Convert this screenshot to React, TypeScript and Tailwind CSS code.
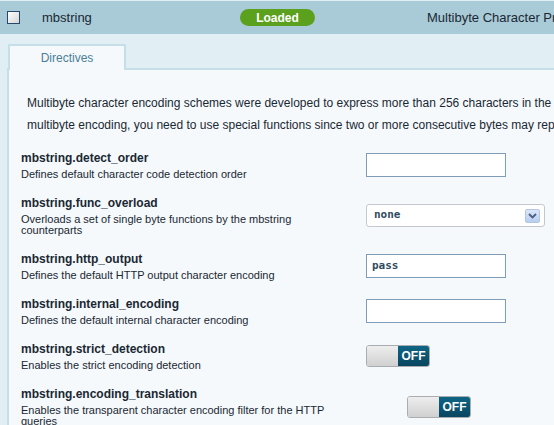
import React from "react";

type Directive = {
    name: string;
    desc: string;
    kind: "text" | "select" | "toggle";
    value?: string;
    shift?: boolean;
};

const directives: Directive[] = [
    { name: "mbstring.detect_order", desc: "Defines default character code detection order", kind: "text" },
    { name: "mbstring.func_overload", desc: "Overloads a set of single byte functions by the mbstring counterparts", kind: "select", value: "none" },
    { name: "mbstring.http_output", desc: "Defines the default HTTP output character encoding", kind: "text", value: "pass" },
    { name: "mbstring.internal_encoding", desc: "Defines the default internal character encoding", kind: "text" },
    { name: "mbstring.strict_detection", desc: "Enables the strict encoding detection", kind: "toggle" },
    { name: "mbstring.encoding_translation", desc: "Enables the transparent character encoding filter for the HTTP queries", kind: "toggle", shift: true },
];

function Toggle() {
    return (
        <div className="flex h-[22px] w-[64px] overflow-hidden rounded-[3px] border border-[#a9adb0]">
            <div className="w-[31px] bg-gradient-to-b from-[#eeeeee] to-[#d0d0d0]" />
            <div className="flex flex-1 items-center justify-center bg-gradient-to-b from-[#0f6585] to-[#094660] text-[12px] font-bold text-white">
                OFF
            </div>
        </div>
    );
}

function Control({ d }: { d: Directive }) {
    if (d.kind === "toggle") return <Toggle />;

    if (d.kind === "select") {
        return (
            <div className="flex h-[23px] w-[179px] items-center justify-between rounded-[3px] border border-[#c4c8cc] bg-white pl-[7px] pr-[4px]">
                <span className="font-['DejaVu_Sans_Mono',monospace] text-[11px] font-bold text-[#2f4b5e]">{d.value}</span>
                <span className="flex h-[14px] w-[15px] items-center justify-center rounded-[2px] border border-[#b3c6e8] bg-gradient-to-b from-[#dbe6f8] to-[#b9cdf0]">
                    <svg width="9" height="6" viewBox="0 0 9 6">
                        <path d="M1 1 L4.5 4.5 L8 1" stroke="#4a5f82" strokeWidth="1.8" fill="none" />
                    </svg>
                </span>
            </div>
        );
    }

    return (
        <div className="flex h-[24px] w-[140px] items-center border border-[#7f9db9] bg-white px-[5px]">
            <span className="font-['DejaVu_Sans_Mono',monospace] text-[11px] font-bold text-[#2f4b5e]">{d.value}</span>
        </div>
    );
}

export default function App() {
    return (
        <div className="h-[425px] w-[554px] overflow-hidden bg-[#e1eef4] font-['Liberation_Sans',Arial,sans-serif] text-[#1a2833]">
            <div className="w-[900px]">
                {/* Extension header */}
                <div className="flex h-[34px] items-center border-t border-[#e1eef4] bg-[#a9cad7]">
                    <span className="ml-[7px] h-[13px] w-[13px] border border-[#274a6c] bg-gradient-to-br from-white to-[#d6d6d6]" />
                    <span className="ml-[22px] w-[198px] text-[13px]">mbstring</span>
                    <span className="flex h-[17px] w-[75px] items-center justify-center rounded-full bg-[#5ba11d] text-[12px] font-bold text-white">
                        Loaded
                    </span>
                    <span className="ml-[112px] text-[13px]">Multibyte Character Processing</span>
                </div>

                {/* Tabs */}
                <div className="flex h-[34px] items-end pl-[8px]">
                    <div className="-mb-[2px] flex h-[26px] w-[118px] items-center justify-center rounded-t-[2px] border-2 border-b-0 border-[#c5dfe8] bg-[#f5f9fc] text-[12px] text-[#4b7f97]">
                        Directives
                    </div>
                </div>

                {/* Directives panel */}
                <div className="ml-[7px] min-h-[400px] border-l-2 border-t-2 border-[#c5dfe8] bg-[#f5f9fc] pt-[22px]">
                    <div className="ml-[18px] whitespace-nowrap text-[12px] leading-[22px]">
                        <p>Multibyte character encoding schemes were developed to express more than 256 characters in the regular bytewise coding system. When using</p>
                        <p>multibyte encoding, you need to use special functions since two or more consecutive bytes may represent a single character.</p>
                    </div>

                    <div className="mt-[14px] flex flex-col gap-[15px] pl-[12px]">
                        {directives.map((d) => (
                            <div key={d.name} className="flex items-center">
                                <div className="w-[345px]">
                                    <div className="text-[12px] font-bold leading-[16px]">{d.name}</div>
                                    <div className="mt-[3px] w-[305px] text-[11px] leading-[11px]">{d.desc}</div>
                                </div>
                                <div className={d.shift ? "ml-[41px]" : ""}>
                                    <Control d={d} />
                                </div>
                            </div>
                        ))}
                    </div>
                </div>
            </div>
        </div>
    );
}
